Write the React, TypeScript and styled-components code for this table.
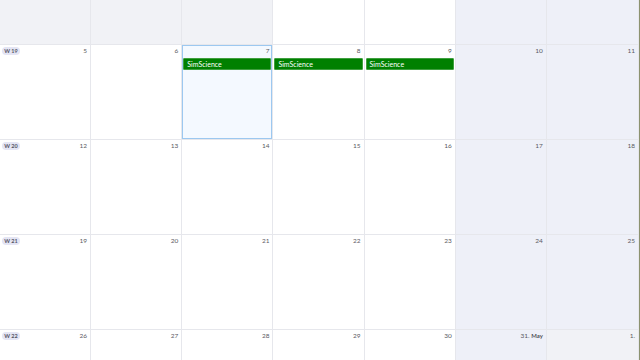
import React from "react";
import styled, { createGlobalStyle, css } from "styled-components";

const Global = createGlobalStyle`
  html, body { margin: 0; padding: 0; background: #fff; }
  body { font-family: Lato, "Open Sans", "Liberation Sans", sans-serif; }
`;

const Frame = styled.div`
  width: 640px;
  height: 360px;
  overflow: hidden;
  display: flex;
  background: #fff;
`;

const Viewport = styled.div`
  width: 638px;
  height: 360px;
  overflow: hidden;
  border-right: 1px solid #e6e7ec;
`;

const Edge = styled.div`
  width: 1px;
  height: 360px;
  background: #8c9270;
`;

const Month = styled.div`
  display: grid;
  grid-template-columns: repeat(7, 1fr);
  grid-template-rows: 45px repeat(4, 95px);
`;

type Kind = "normal" | "outside" | "weekend" | "today";

const Cell = styled.div<{ $kind: Kind; $last: boolean }>`
  box-sizing: border-box;
  border-bottom: 1px solid #e6e7ec;
  border-right: ${(p) => (p.$last ? "none" : "1px solid #e6e7ec")};
  display: flex;
  flex-direction: column;
  background: ${(p) =>
    p.$kind === "outside"
      ? "#f1f2f6"
      : p.$kind === "weekend"
      ? "#eef0f8"
      : p.$kind === "today"
      ? "#f4f9ff"
      : "#ffffff"};
  ${(p) =>
    p.$kind === "today" &&
    css`
      box-shadow: inset 0 0 0 1px #9cc8f0;
    `}
`;

const Head = styled.div`
  display: flex;
  align-items: flex-start;
  justify-content: space-between;
  height: 13px;
  padding: 2px 3px 0 2px;
  box-sizing: border-box;
`;

const WeekBadge = styled.span`
  display: inline-flex;
  align-items: center;
  justify-content: center;
  height: 8px;
  width: 18px;
  border-radius: 4px;
  background: #e4e5f4;
  color: #555566;
  font-size: 5.5px;
  font-weight: 700;
  line-height: 8px;
  white-space: nowrap;
`;

const DayNum = styled.span`
  margin-left: auto;
  font-size: 6.5px;
  line-height: 9px;
  color: #5a5a62;
  margin-top: -1px;
  white-space: nowrap;
  b {
    font-weight: 600;
    color: #3a3a44;
    font-size: 6px;
  }
`;

const Events = styled.div`
  display: flex;
  flex-direction: column;
  padding: 0 1px;
`;

const EventBar = styled.div`
  height: 12px;
  box-sizing: border-box;
  background: #008000;
  border: 1px solid #3f9f3f;
  border-radius: 1px;
  color: #ffffff;
  font-size: 7px;
  line-height: 10px;
  padding-left: 3px;
  white-space: nowrap;
  overflow: hidden;
`;

type Day = {
  label?: React.ReactNode;
  kind: Kind;
  events?: string[];
};

const weeks: { week: number; partial?: boolean; days: Day[] }[] = [
  {
    week: 18,
    partial: true,
    days: [
      { kind: "outside" },
      { kind: "outside" },
      { kind: "outside" },
      { kind: "normal" },
      { kind: "normal" },
      { kind: "weekend" },
      { kind: "weekend" },
    ],
  },
  {
    week: 19,
    days: [
      { label: "5", kind: "normal" },
      { label: "6", kind: "normal" },
      { label: "7", kind: "today", events: ["SimScience"] },
      { label: "8", kind: "normal", events: ["SimScience"] },
      { label: "9", kind: "normal", events: ["SimScience"] },
      { label: "10", kind: "weekend" },
      { label: "11", kind: "weekend" },
    ],
  },
  {
    week: 20,
    days: [
      { label: "12", kind: "normal" },
      { label: "13", kind: "normal" },
      { label: "14", kind: "normal" },
      { label: "15", kind: "normal" },
      { label: "16", kind: "normal" },
      { label: "17", kind: "weekend" },
      { label: "18", kind: "weekend" },
    ],
  },
  {
    week: 21,
    days: [
      { label: "19", kind: "normal" },
      { label: "20", kind: "normal" },
      { label: "21", kind: "normal" },
      { label: "22", kind: "normal" },
      { label: "23", kind: "normal" },
      { label: "24", kind: "weekend" },
      { label: "25", kind: "weekend" },
    ],
  },
  {
    week: 22,
    days: [
      { label: "26", kind: "normal" },
      { label: "27", kind: "normal" },
      { label: "28", kind: "normal" },
      { label: "29", kind: "normal" },
      { label: "30", kind: "normal" },
      {
        label: (
          <>
            31. <b>May</b>
          </>
        ),
        kind: "weekend",
      },
      { label: "1.", kind: "outside" },
    ],
  },
];

export default function App() {
  return (
    <Frame>
      <Global />
      <Viewport>
        <Month>
          {weeks.map((w) =>
            w.days.map((d, i) => (
              <Cell key={`${w.week}-${i}`} $kind={d.kind} $last={i === 6}>
                {!w.partial && (
                  <Head>
                    {i === 0 && <WeekBadge>W {w.week}</WeekBadge>}
                    <DayNum>{d.label}</DayNum>
                  </Head>
                )}
                {d.events && (
                  <Events>
                    {d.events.map((e) => (
                      <EventBar key={e}>{e}</EventBar>
                    ))}
                  </Events>
                )}
              </Cell>
            ))
          )}
        </Month>
      </Viewport>
      <Edge />
    </Frame>
  );
}
